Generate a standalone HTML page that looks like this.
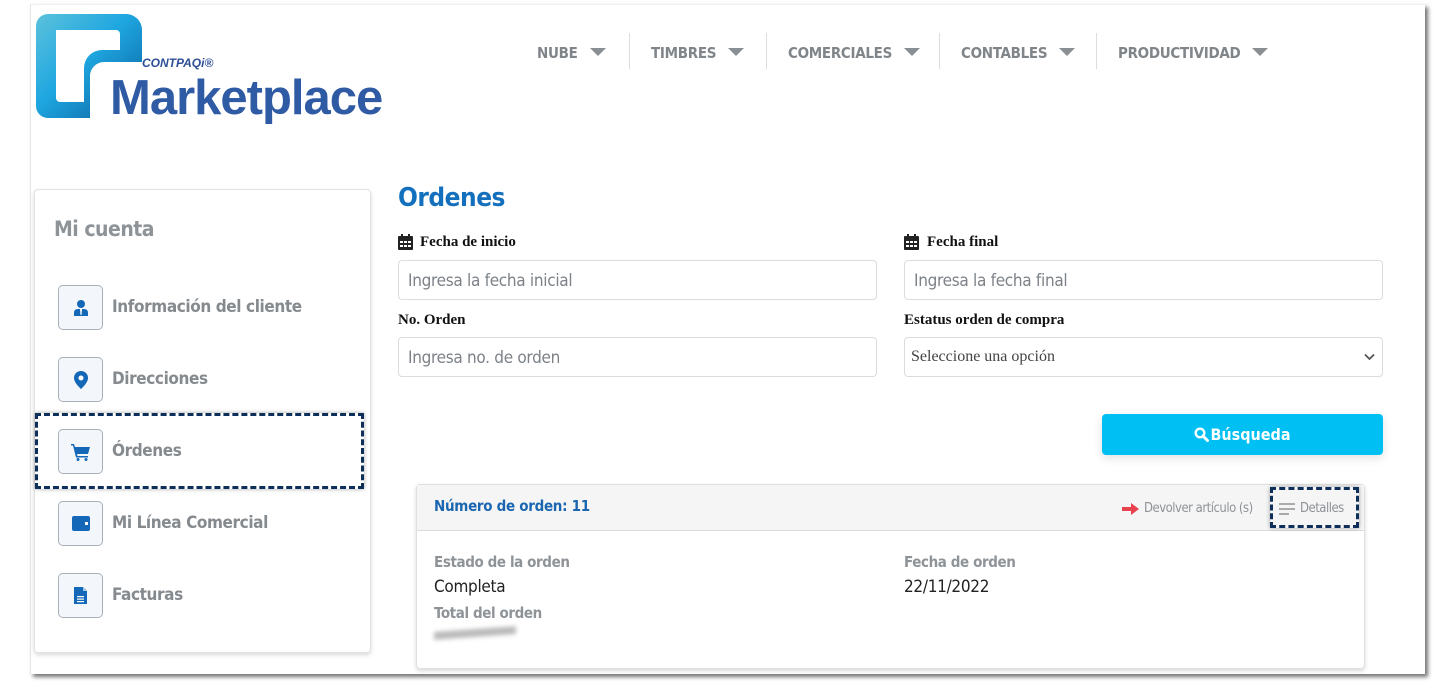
<!DOCTYPE html>
<html><head><meta charset="utf-8">
<style>
*{box-sizing:border-box;margin:0;padding:0}
body{width:1434px;height:682px;background:#fff;position:relative;overflow:hidden;font-family:"Liberation Sans Narrow","DejaVu Sans Condensed","Liberation Sans",sans-serif}
.frame{position:absolute;left:30px;top:4px;width:1395px;height:670px;background:#fff;border-left:1px solid #e6e6e6;border-top:1px solid #eee;box-shadow:3px 3px 4px rgba(0,0,0,.55)}
.a{position:absolute;white-space:nowrap}
.nav{position:absolute;top:44px;font-size:15px;letter-spacing:-.3px;color:#80858a;display:flex;align-items:center;font-weight:bold}
.nav span.t{border-top:8px solid #8a8f94;border-left:8px solid transparent;border-right:8px solid transparent;margin-left:12px;margin-top:-2px}
.sep{position:absolute;top:33px;width:1px;height:36px;background:#ddd}
.side{position:absolute;left:34px;top:189px;width:337px;height:464px;border:1px solid #e2e2e2;border-radius:4px;box-shadow:0 2px 4px rgba(0,0,0,.15)}
.ib{position:absolute;left:58px;width:45px;height:45px;border:1px solid #a9b0b7;border-radius:5px;background:#f3f7fb;display:flex;align-items:center;justify-content:center}
.il{position:absolute;left:112px;font-size:17px;letter-spacing:-.4px;color:#858a8f;font-weight:bold}
.lbl{position:absolute;font-family:"Liberation Serif",serif;font-weight:bold;font-size:15px;color:#111}
.inp{position:absolute;width:479px;height:40px;border:1px solid #dcdcdc;border-radius:4px;font-size:17px;letter-spacing:-.3px;color:#7c8288;padding:10px 9px}
.dash{position:absolute;border:3px dashed #0d2f5a;box-shadow:0 0 4px rgba(0,0,0,.35)}
.g{color:#8e9398;font-size:15px;letter-spacing:-.4px;font-weight:bold}
</style></head><body>
<div class="frame"></div>
<svg class="a" style="left:34px;top:12px" width="110" height="108" viewBox="0 0 110 108">
<defs><linearGradient id="g" x1="0" y1="0" x2="1" y2="1"><stop offset="0" stop-color="#5cc2dc"/><stop offset=".45" stop-color="#1ea6e0"/><stop offset="1" stop-color="#0a5c9a"/></linearGradient></defs>
<path d="M14 2H92A16 16 0 0 1 108 18V50H70A14 14 0 0 0 56 64V106H14A12 12 0 0 1 2 94V14A12 12 0 0 1 14 2Z" fill="url(#g)"/>
<path d="M22 18H82A4 4 0 0 1 86 22V38H68A18 18 0 0 0 50 56V90H26A4 4 0 0 1 22 86Z" fill="#fff"/>
</svg>
<div class="a" style="left:142px;top:56px;font-family:'Liberation Sans',sans-serif;font-weight:bold;font-style:italic;font-size:12px;color:#2d4f95">CONTPAQ<i>i</i>®</div>
<div class="a" style="left:110px;top:68px;font-family:'Liberation Sans',sans-serif;font-weight:bold;font-size:49px;letter-spacing:-1px;color:#2f5aa4;line-height:60px">Marketplace</div>
<div class="nav" style="left:537px">NUBE<span class="t"></span></div>
<div class="sep" style="left:629px"></div>
<div class="nav" style="left:651px">TIMBRES<span class="t"></span></div>
<div class="sep" style="left:766px"></div>
<div class="nav" style="left:788px">COMERCIALES<span class="t"></span></div>
<div class="sep" style="left:939px"></div>
<div class="nav" style="left:961px">CONTABLES<span class="t"></span></div>
<div class="sep" style="left:1096px"></div>
<div class="nav" style="left:1118px">PRODUCTIVIDAD<span class="t"></span></div>
<div class="side"></div>
<div class="a" style="left:54px;top:217px;font-size:21px;letter-spacing:-.5px;color:#8e9398;font-weight:bold">Mi cuenta</div>
<div class="ib" style="top:285px"><svg width="16" height="18" viewBox="0 0 16 18"><circle cx="8" cy="5" r="4" fill="#1568b8"/><path d="M1 17V14Q1 10 5 10H11Q15 10 15 14V17Z" fill="#1568b8"/><path d="M7 10H9L8.5 16H7.5Z" fill="#fff"/></svg></div>
<div class="il" style="top:297px">Información del cliente</div>
<div class="ib" style="top:357px"><svg width="14" height="18" viewBox="0 0 14 18"><path d="M7 0A7 7 0 0 1 14 7C14 12 7 18 7 18S0 12 0 7A7 7 0 0 1 7 0Z" fill="#1568b8"/><circle cx="7" cy="7" r="2.5" fill="#fff"/></svg></div>
<div class="il" style="top:369px">Direcciones</div>
<div class="ib" style="top:429px"><svg width="20" height="18" viewBox="0 0 20 18"><path d="M0 1H3L4 4H19L17 11H6L6.5 13H17V14.5H5L2 2.5H0Z" fill="#1568b8"/><circle cx="7" cy="16.5" r="1.5" fill="#1568b8"/><circle cx="15" cy="16.5" r="1.5" fill="#1568b8"/></svg></div>
<div class="il" style="top:441px">Órdenes</div>
<div class="ib" style="top:501px"><svg width="18" height="15" viewBox="0 0 18 15"><rect x="0" y="0" width="18" height="15" rx="2" fill="#1568b8"/><rect x="13" y="6" width="3" height="3" fill="#fff"/></svg></div>
<div class="il" style="top:513px">Mi Línea Comercial</div>
<div class="ib" style="top:573px"><svg width="13" height="17" viewBox="0 0 13 17"><path d="M0 0H9L13 4V17H0Z" fill="#1568b8"/><path d="M9 0V4H13" fill="#9cc3ea"/><rect x="3" y="9" width="7" height="1.2" fill="#fff"/><rect x="3" y="11.5" width="7" height="1.2" fill="#fff"/><rect x="3" y="14" width="7" height="1.2" fill="#fff"/></svg></div>
<div class="il" style="top:585px">Facturas</div>
<div class="dash" style="left:35px;top:413px;width:329px;height:76px"></div>
<div class="a" style="left:398px;top:183px;font-size:26px;letter-spacing:-.5px;color:#1470bd;font-weight:bold">Ordenes</div>
<svg class="a" style="left:398px;top:234px" width="15" height="16" viewBox="0 0 15 16"><rect x="3" y="0" width="2" height="3" fill="#222"/><rect x="10" y="0" width="2" height="3" fill="#222"/><rect x="0" y="2" width="15" height="14" rx="1" fill="#222"/><g fill="#fff"><rect x="2" y="7" width="3" height="2"/><rect x="6" y="7" width="3" height="2"/><rect x="10" y="7" width="3" height="2"/><rect x="2" y="11" width="3" height="2"/><rect x="6" y="11" width="3" height="2"/><rect x="10" y="11" width="3" height="2"/></g></svg>
<div class="lbl" style="left:420px;top:234px">Fecha de inicio</div>
<div class="inp" style="left:398px;top:260px">Ingresa la fecha inicial</div>
<svg class="a" style="left:904px;top:234px" width="15" height="16" viewBox="0 0 15 16"><rect x="3" y="0" width="2" height="3" fill="#222"/><rect x="10" y="0" width="2" height="3" fill="#222"/><rect x="0" y="2" width="15" height="14" rx="1" fill="#222"/><g fill="#fff"><rect x="2" y="7" width="3" height="2"/><rect x="6" y="7" width="3" height="2"/><rect x="10" y="7" width="3" height="2"/><rect x="2" y="11" width="3" height="2"/><rect x="6" y="11" width="3" height="2"/><rect x="10" y="11" width="3" height="2"/></g></svg>
<div class="lbl" style="left:927px;top:234px">Fecha final</div>
<div class="inp" style="left:904px;top:260px">Ingresa la fecha final</div>
<div class="lbl" style="left:398px;top:312px">No. Orden</div>
<div class="inp" style="left:398px;top:337px">Ingresa no. de orden</div>
<div class="lbl" style="left:904px;top:312px">Estatus orden de compra</div>
<div class="inp" style="left:904px;top:337px;font-family:'Liberation Serif',serif;font-size:16px;letter-spacing:0;color:#444;padding-left:6px">Seleccione una opción</div>
<svg class="a" style="left:1364px;top:353px" width="11" height="8" viewBox="0 0 11 8"><path d="M1 1.5L5.5 6L10 1.5" stroke="#555" stroke-width="1.8" fill="none"/></svg>
<div class="a" style="left:1102px;top:414px;width:281px;height:41px;background:#00c0f3;border-radius:4px;box-shadow:0 3px 10px rgba(0,0,0,.12);color:#fff;font-size:16px;font-weight:bold;display:flex;align-items:center;justify-content:center"><svg width="15" height="15" viewBox="0 0 15 15" style="margin-right:1px"><circle cx="6" cy="6" r="4.3" stroke="#fff" stroke-width="2.4" fill="none"/><path d="M9 9L13.5 13.5" stroke="#fff" stroke-width="3" stroke-linecap="round"/></svg>Búsqueda</div>
<div class="a" style="left:416px;top:484px;width:949px;height:185px;border:1px solid #e0e0e0;border-radius:4px;box-shadow:0 2px 4px rgba(0,0,0,.15)"></div>
<div class="a" style="left:417px;top:485px;width:947px;height:46px;background:#f5f5f5;border-bottom:1px solid #dcdcdc"></div>
<div class="a" style="left:434px;top:497px;font-size:15px;letter-spacing:-.3px;color:#1a66b0;font-weight:bold">Número de orden: 11</div>
<svg class="a" style="left:1122px;top:503px" width="17" height="12" viewBox="0 0 17 12"><path d="M0 4H9V0L17 6L9 12V8H0Z" fill="#e8424e"/></svg>
<div class="a" style="left:1144px;top:501px;font-size:13px;letter-spacing:-.5px;color:#8e9398">Devolver artículo (s)</div>
<svg class="a" style="left:1279px;top:503px" width="16" height="12" viewBox="0 0 16 12"><rect y="0" width="16" height="2" fill="#aaa"/><rect y="5" width="16" height="2" fill="#aaa"/><rect y="10" width="10" height="2" fill="#aaa"/></svg>
<div class="a" style="left:1300px;top:501px;font-size:13px;letter-spacing:-.5px;color:#8e9398">Detalles</div>
<div class="dash" style="left:1270px;top:487px;width:89px;height:41px"></div>
<div class="a g" style="left:434px;top:553px">Estado de la orden</div>
<div class="a" style="left:434px;top:577px;font-size:17px;letter-spacing:-.3px;color:#222">Completa</div>
<div class="a g" style="left:434px;top:604px">Total del orden</div>
<div class="a" style="left:434px;top:629px;width:82px;height:8px;background:#bbb;filter:blur(2px);transform:skewY(-4deg)"></div>
<div class="a g" style="left:904px;top:553px">Fecha de orden</div>
<div class="a" style="left:904px;top:577px;font-size:17px;letter-spacing:-.3px;color:#222">22/11/2022</div>
</body></html>
